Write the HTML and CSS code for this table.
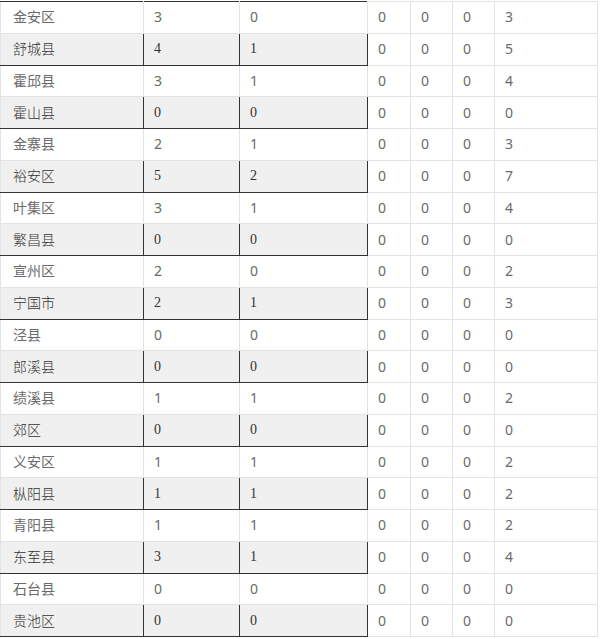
FILE: index.html
```
<!DOCTYPE html>
<html lang="zh">
<head>
<meta charset="utf-8">
<link rel="stylesheet" href="styles.css">
</head>
<body>
<table class="stats">
<colgroup>
<col class="c1"><col class="c2"><col class="c3"><col class="c4"><col class="c5"><col class="c6"><col class="c7">
</colgroup>
<tbody>
<tr class="odd first"><td>金安区</td><td>3</td><td>0</td><td>0</td><td>0</td><td>0</td><td>3</td></tr>
<tr class="even"><td>舒城县</td><td>4</td><td>1</td><td>0</td><td>0</td><td>0</td><td>5</td></tr>
<tr class="odd"><td>霍邱县</td><td>3</td><td>1</td><td>0</td><td>0</td><td>0</td><td>4</td></tr>
<tr class="even"><td>霍山县</td><td>0</td><td>0</td><td>0</td><td>0</td><td>0</td><td>0</td></tr>
<tr class="odd"><td>金寨县</td><td>2</td><td>1</td><td>0</td><td>0</td><td>0</td><td>3</td></tr>
<tr class="even"><td>裕安区</td><td>5</td><td>2</td><td>0</td><td>0</td><td>0</td><td>7</td></tr>
<tr class="odd"><td>叶集区</td><td>3</td><td>1</td><td>0</td><td>0</td><td>0</td><td>4</td></tr>
<tr class="even"><td>繁昌县</td><td>0</td><td>0</td><td>0</td><td>0</td><td>0</td><td>0</td></tr>
<tr class="odd"><td>宣州区</td><td>2</td><td>0</td><td>0</td><td>0</td><td>0</td><td>2</td></tr>
<tr class="even"><td>宁国市</td><td>2</td><td>1</td><td>0</td><td>0</td><td>0</td><td>3</td></tr>
<tr class="odd"><td>泾县</td><td>0</td><td>0</td><td>0</td><td>0</td><td>0</td><td>0</td></tr>
<tr class="even"><td>郎溪县</td><td>0</td><td>0</td><td>0</td><td>0</td><td>0</td><td>0</td></tr>
<tr class="odd"><td>绩溪县</td><td>1</td><td>1</td><td>0</td><td>0</td><td>0</td><td>2</td></tr>
<tr class="even"><td>郊区</td><td>0</td><td>0</td><td>0</td><td>0</td><td>0</td><td>0</td></tr>
<tr class="odd"><td>义安区</td><td>1</td><td>1</td><td>0</td><td>0</td><td>0</td><td>2</td></tr>
<tr class="even"><td>枞阳县</td><td>1</td><td>1</td><td>0</td><td>0</td><td>0</td><td>2</td></tr>
<tr class="odd"><td>青阳县</td><td>1</td><td>1</td><td>0</td><td>0</td><td>0</td><td>2</td></tr>
<tr class="even"><td>东至县</td><td>3</td><td>1</td><td>0</td><td>0</td><td>0</td><td>4</td></tr>
<tr class="odd"><td>石台县</td><td>0</td><td>0</td><td>0</td><td>0</td><td>0</td><td>0</td></tr>
<tr class="even"><td>贵池区</td><td>0</td><td>0</td><td>0</td><td>0</td><td>0</td><td>0</td></tr>
</tbody>
</table>
</body>
</html>
```
FILE: styles.css
```
html, body {
  margin: 0;
  padding: 0;
  background: #fff;
}
.stats {
  margin-top: 1px;
  border-collapse: collapse;
  table-layout: fixed;
  width: 597px;
  font-family: "Noto Sans", "Noto Sans CJK SC", sans-serif;
  font-size: 14px;
  color: #6a6a6a;
}
.c1 { width: 143px; }
.c2 { width: 96px; }
.c3 { width: 128px; }
.c4 { width: 43px; }
.c5 { width: 42px; }
.c6 { width: 42px; }
.c7 { width: 103px; }
.stats td {
  border: 1px solid #e3e3e3;
  height: 30.75px;
  padding: 0 0 0 10px;
  vertical-align: middle;
  line-height: 16px;
  white-space: nowrap;
}
.stats td:first-child {
  padding-left: 12px;
}
.stats .first td:nth-child(-n+3) {
  border-top-color: #333;
}
.stats .even td:nth-child(-n+3) {
  background: #f0f0f0;
  border-right-color: #333;
  border-bottom-color: #333;
  color: #333;
}
.stats .even td:first-child {
  font-weight: 300;
}
.stats .even td:nth-child(2),
.stats .even td:nth-child(3) {
  font-family: "Liberation Serif", "Noto Sans CJK SC", serif;
  font-size: 14px;
  color: #333;
}
```
